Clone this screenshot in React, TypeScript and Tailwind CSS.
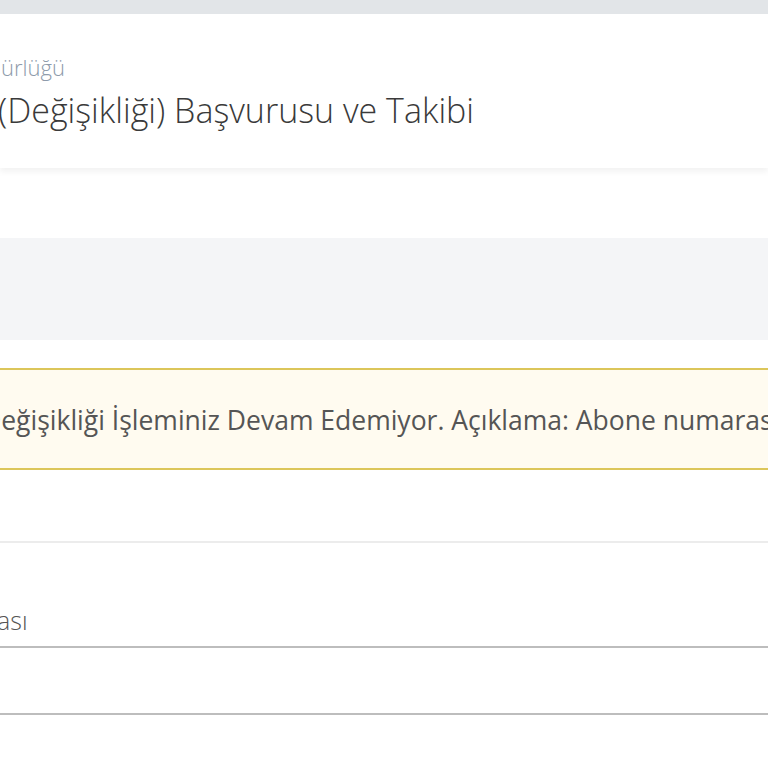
import React from "react";

export default function App() {
  return (
    <div
      className="w-[768px] h-[768px] overflow-hidden bg-white flex flex-col"
      style={{ fontFamily: '"Open Sans", "Noto Sans", sans-serif' }}
    >
      <div className="h-[14px] shrink-0 bg-[#e2e5e8]" />
      <div className="h-[154px] shrink-0 bg-white flex flex-col pt-[37px] overflow-hidden shadow-[0_4px_6px_rgba(0,0,0,0.05)] relative z-10">
        <div className="whitespace-nowrap text-[22px] leading-[32px] text-[#8e9bab] font-light -ml-[44px]">
          Müdürlüğü
        </div>
        <div className="whitespace-nowrap text-[34px] leading-[44px] text-[#3a3a3a] font-light mt-[5px] -ml-[2px]">
          (Değişikliği) Başvurusu ve Takibi
        </div>
      </div>
      <div className="h-[70px] shrink-0 bg-white" />
      <div className="h-[102px] shrink-0 bg-[#f4f5f7]" />
      <div className="h-[28px] shrink-0 bg-white" />
      <div className="h-[102px] shrink-0 bg-[#fffbf0] border-y-2 border-[#dcc65a] flex items-center pt-[3px] overflow-hidden">
        <div className="whitespace-nowrap text-[26.5px] text-[#555] -ml-[18px]">
          Değişikliği İşleminiz Devam Edemiyor. Açıklama: Abone numarası bulunamadı.
        </div>
      </div>
      <div className="h-[71px] shrink-0 bg-white" />
      <div className="h-[107px] shrink-0 bg-white border-t-2 border-[#ececec] border-b-2 border-b-[#bdbdbd] flex items-end pb-[7px] overflow-hidden">
        <div className="whitespace-nowrap text-[25px] text-[#555] font-light -ml-[3px]">ası</div>
      </div>
      <div className="h-[67px] shrink-0 bg-white border-b-2 border-[#bdbdbd]" />
      <div className="flex-1 bg-white" />
    </div>
  );
}
